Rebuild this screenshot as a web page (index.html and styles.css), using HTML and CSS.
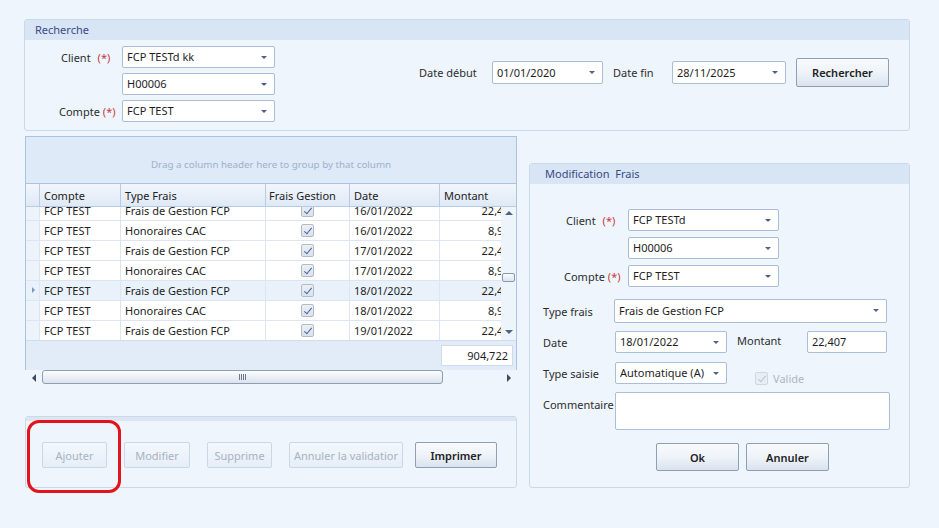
FILE: index.html
```html
<!DOCTYPE html>
<html lang="fr">
<head>
    <meta charset="UTF-8">
    <title>Frais</title>
    <link rel="stylesheet" href="styles.css">
</head>
<body>
<div class="screen">
    <section class="panel search">
        <div class="panel-head">Recherche</div>
        <div class="search-body">
            <div class="party">
                <div class="lbl lbl-client">Client <span class="req">(*)</span></div>
                <div class="combo">FCP TESTd kk</div>
                <div></div>
                <div class="combo">H00006</div>
                <div class="lbl lbl-compte">Compte <span class="req tight">(*)</span></div>
                <div class="combo">FCP TEST</div>
            </div>
            <div class="dates">
                <div class="lbl w-debut">Date début</div>
                <div class="combo date-a">01/01/2020</div>
                <div class="lbl w-fin">Date fin</div>
                <div class="combo date-b">28/11/2025</div>
                <button class="btn strong search-btn">Rechercher</button>
            </div>
        </div>
    </section>

    <div class="lower">
        <div class="left-col">
            <div class="grid">
                <div class="group-area">Drag a column header here to group by that column</div>
                <div class="grid-head">
                    <div class="head-view">
                        <div class="c ind"></div>
                        <div class="c compte">Compte</div>
                        <div class="c type">Type Frais</div>
                        <div class="c gest">Frais Gestion</div>
                        <div class="c date">Date</div>
                        <div class="c mnt">Montant</div>
                    </div>
                    <div class="head-corner"></div>
                </div>
                <div class="grid-body">
                    <div class="rows-view">
                        <div class="rows">
                            <div class="row"><div class="c ind"></div><div class="c compte">FCP TEST</div><div class="c type">Frais de Gestion FCP</div><div class="c gest"><span class="chk"></span></div><div class="c date">16/01/2022</div><div class="c mnt">22,407</div></div>
                            <div class="row"><div class="c ind"></div><div class="c compte">FCP TEST</div><div class="c type">Honoraires CAC</div><div class="c gest"><span class="chk"></span></div><div class="c date">16/01/2022</div><div class="c mnt">8,907</div></div>
                            <div class="row"><div class="c ind"></div><div class="c compte">FCP TEST</div><div class="c type">Frais de Gestion FCP</div><div class="c gest"><span class="chk"></span></div><div class="c date">17/01/2022</div><div class="c mnt">22,407</div></div>
                            <div class="row"><div class="c ind"></div><div class="c compte">FCP TEST</div><div class="c type">Honoraires CAC</div><div class="c gest"><span class="chk"></span></div><div class="c date">17/01/2022</div><div class="c mnt">8,907</div></div>
                            <div class="row current"><div class="c ind"><span class="cur"></span></div><div class="c compte">FCP TEST</div><div class="c type">Frais de Gestion FCP</div><div class="c gest"><span class="chk"></span></div><div class="c date">18/01/2022</div><div class="c mnt">22,407</div></div>
                            <div class="row"><div class="c ind"></div><div class="c compte">FCP TEST</div><div class="c type">Honoraires CAC</div><div class="c gest"><span class="chk"></span></div><div class="c date">18/01/2022</div><div class="c mnt">8,907</div></div>
                            <div class="row"><div class="c ind"></div><div class="c compte">FCP TEST</div><div class="c type">Frais de Gestion FCP</div><div class="c gest"><span class="chk"></span></div><div class="c date">19/01/2022</div><div class="c mnt">22,407</div></div>
                        </div>
                    </div>
                    <div class="vscroll">
                        <span class="arr up"></span>
                        <span class="vthumb"></span>
                        <span class="arr down"></span>
                    </div>
                </div>
                <div class="grid-foot">
                    <div class="total">904,722</div>
                </div>
            </div>
            <div class="hscroll">
                <span class="arr left"></span>
                <span class="hthumb"><span class="grip"></span></span>
                <span class="arr right"></span>
            </div>

            <section class="panel actions">
                <div class="actions-band"></div>
                <div class="actions-row">
                    <button class="btn off b-add">Ajouter</button>
                    <button class="btn off b-mod">Modifier</button>
                    <button class="btn off b-del">Supprime</button>
                    <button class="btn off b-cancel">Annuler la validatior</button>
                    <button class="btn strong b-print">Imprimer</button>
                </div>
                <div class="mark"></div>
            </section>
        </div>

        <section class="panel edit">
            <div class="panel-head">Modification&nbsp; Frais</div>
            <div class="edit-body">
                <div class="who">
                    <div class="f-row">
                        <div class="lbl who-lbl">Client <span class="req">(*)</span></div>
                        <div class="combo who-combo">FCP TESTd</div>
                    </div>
                    <div class="f-row gap6">
                        <div class="lbl who-lbl"></div>
                        <div class="combo who-combo">H00006</div>
                    </div>
                    <div class="f-row gap6">
                        <div class="lbl who-lbl lbl-compte2">Compte <span class="req tight">(*)</span></div>
                        <div class="combo who-combo">FCP TEST</div>
                    </div>
                </div>
                <div class="f-row type-row">
                    <div class="lbl f-lbl type-lbl">Type frais</div>
                    <div class="combo type-combo">Frais de Gestion FCP</div>
                </div>
                <div class="f-row date-row">
                    <div class="lbl f-lbl">Date</div>
                    <div class="combo small-combo">18/01/2022</div>
                    <div class="lbl mnt-lbl">Montant</div>
                    <div class="field mnt-field">22,407</div>
                </div>
                <div class="f-row saisie-row">
                    <div class="lbl f-lbl">Type saisie</div>
                    <div class="combo small-combo">Automatique (A)</div>
                    <div class="valide"><span class="chk dim"></span>Valide</div>
                </div>
                <div class="f-row comment-row">
                    <div class="lbl f-lbl comment-lbl">Commentaire</div>
                    <div class="field comment"></div>
                </div>
                <div class="f-row edit-btns">
                    <button class="btn strong b-ok">Ok</button>
                    <button class="btn strong b-annuler">Annuler</button>
                </div>
            </div>
        </section>
    </div>
</div>
</body>
</html>
```

FILE: styles.css
```css
* { box-sizing: border-box; }
body {
    margin: 0;
    background: #eef5fd;
    font-family: "Noto Sans", "Open Sans", sans-serif;
    font-size: 11px;
    color: #2d2d2d;
}
.screen { width: 939px; height: 528px; padding: 19px 0 0 24px; overflow: hidden; }

/* panels */
.panel { border: 1px solid #cad8e8; border-radius: 3px; background: #eef5fd; }
.panel-head { height: 20px; line-height: 19px; padding-left: 10px; background: #d8e5f4; color: #3a4a86; }
.lbl { color: #2d2d2d; white-space: nowrap; display: flex; align-items: center; }
.req { color: #c8393f; margin-left: 7px; }
.req.tight { margin-left: 3px; }

/* inputs */
.combo, .field {
    position: relative;
    height: 22px;
    background: #fff;
    border: 1px solid #a9bed8;
    border-radius: 2px;
    padding: 0 18px 0 4px;
    line-height: 19px;
    color: #1e1e1e;
    white-space: nowrap;
}
.combo::after {
    content: "";
    position: absolute;
    right: 7px;
    top: 9px;
    border-left: 3px solid transparent;
    border-right: 3px solid transparent;
    border-top: 3px solid #4f6188;
}
.btn {
    font-family: inherit;
    font-size: 11px;
    height: 26px;
    border: 1px solid #c9d7e7;
    border-radius: 2px;
    background: linear-gradient(#f4f8fd, #e6eef8);
    color: #a8b2be;
    padding: 0;
}
.btn.strong {
    border-color: #8e9fb6;
    background: linear-gradient(#f8fafd 0%, #eef3f9 50%, #d9e3ef 100%);
    color: #222;
    font-weight: 600;
}

/* search panel */
.search { width: 886px; height: 112px; }
.search-body { display: flex; padding-top: 6px; }
.party { display: grid; grid-template-columns: 97px 153px; grid-auto-rows: 22px; row-gap: 5px; }
.lbl-client { padding-left: 36px; }
.lbl-compte { padding-left: 34px; }
.dates { display: flex; align-items: center; height: 29px; margin: 12px 0 0 144px; }
.w-debut { width: 73px; }
.w-fin { width: 69px; padding-left: 10px; }
.date-a { width: 111px; height: 23px; line-height: 21px; }
.date-b { width: 114px; height: 23px; line-height: 21px; }
.search-btn { width: 93px; height: 29px; margin-left: 10px; }

/* lower area */
.lower { display: flex; align-items: flex-start; }
.left-col { width: 493px; padding-left: 1px; margin-top: 5px; }

/* data grid */
.grid { border: 1px solid #a9c3e4; border-bottom: none; background: #fff; }
.group-area {
    height: 47px;
    padding-top: 9px;
    display: flex;
    align-items: center;
    justify-content: center;
    background: #dfeaf8;
    color: #9cb0cc;
    font-size: 9.8px;
    border-bottom: 1px solid #a9c3e4;
}
.grid-head { display: flex; height: 23px; background: linear-gradient(#f2f6fc, #dfe9f6); border-bottom: 1px solid #b6cbe6; }
.head-view { width: 475px; overflow: hidden; display: flex; }
.head-view .c { border-right: 1px solid #b6cbe6; padding-left: 4px; display: flex; align-items: center; color: #222; }
.head-view .gest { padding-left: 3px; }
.head-corner { flex: 1; }
.c { flex: none; white-space: nowrap; overflow: hidden; }
.ind { width: 14px; }
.compte { width: 81px; }
.type { width: 145px; }
.gest { width: 84px; }
.date { width: 90px; }
.mnt { width: 81px; }

.grid-body { display: flex; height: 133px; }
.rows-view { width: 475px; overflow: hidden; }
.rows { margin-top: -6px; }
.row { display: flex; height: 20px; border-bottom: 1px solid #dce6f3; background: #fff; }
.row .c { border-right: 1px solid #dce6f3; padding-left: 4px; line-height: 19px; color: #1e1e1e; }
.row .ind { background: #edf3fb; padding: 0; position: relative; }
.row .gest { display: flex; justify-content: center; align-items: center; padding: 0; }
.row .mnt { text-align: right; padding: 0 4px 0 0; }
.row.current { background: #e9f1fb; }
.row.current .c { background: #e9f1fb; }
.cur {
    position: absolute;
    left: 6px;
    top: 6px;
    border-top: 3px solid transparent;
    border-bottom: 3px solid transparent;
    border-left: 3px solid #7d95bb;
}
.chk {
    position: relative;
    display: inline-block;
    width: 13px;
    height: 13px;
    border: 1px solid #b3bbc6;
    border-radius: 2px;
    background: linear-gradient(#eceff3, #dde2e8);
}
.chk::after {
    content: "";
    position: absolute;
    left: 4px;
    top: 1px;
    width: 3px;
    height: 7px;
    border-right: 1.5px solid #3e66ac;
    border-bottom: 1.5px solid #3e66ac;
    transform: rotate(40deg);
}
.chk.dim { border-color: #cfd7e1; background: #e9eef4; }
.chk.dim::after { border-color: #b9c2cd; }

.vscroll { position: relative; flex: 1; background: #eef4fc; }
.arr { position: absolute; width: 0; height: 0; }
.arr.up { left: 4px; top: 4px; border-left: 4px solid transparent; border-right: 4px solid transparent; border-bottom: 4px solid #4f6188; }
.arr.down { left: 4px; bottom: 6px; border-left: 4px solid transparent; border-right: 4px solid transparent; border-top: 4px solid #4f6188; }
.vthumb {
    position: absolute;
    left: 1px;
    top: 66px;
    width: 13px;
    height: 9px;
    border: 1px solid #8797ad;
    border-radius: 2px;
    background: linear-gradient(#fbfcfe, #dce4ee);
}
.grid-foot {
    height: 30px;
    background: #e2ecf9;
    border-top: 1px solid #d0ddee;
    padding: 4px 0 0 415px;
}
.total {
    width: 72px;
    height: 21px;
    background: #fff;
    border: 1px solid #cddbec;
    text-align: right;
    padding-right: 4px;
    line-height: 19px;
    color: #1e1e1e;
}
.hscroll { position: relative; height: 15px; }
.arr.left { left: 7px; top: 4px; border-top: 4px solid transparent; border-bottom: 4px solid transparent; border-right: 4px solid #3d4a60; }
.arr.right { right: 6px; top: 4px; border-top: 4px solid transparent; border-bottom: 4px solid transparent; border-left: 4px solid #3d4a60; }
.hthumb {
    position: absolute;
    left: 17px;
    top: 0;
    width: 401px;
    height: 14px;
    border: 1px solid #8e9db2;
    border-radius: 3px;
    background: linear-gradient(#fbfcfe, #dbe3ed);
}
.grip {
    position: absolute;
    left: 196px;
    top: 3px;
    width: 7px;
    height: 6px;
    background: repeating-linear-gradient(90deg, #6b7a90 0 1px, transparent 1px 2px);
}

/* action buttons */
.actions { position: relative; height: 72px; margin-top: 31px; }
.actions-band { height: 4px; background: #dbe6f2; }
.actions-row { display: flex; gap: 17px; padding: 21px 0 0 16px; }
.b-add { width: 65px; }
.b-mod { width: 66px; }
.b-del { width: 65px; }
.b-cancel { width: 114px; }
.b-print { width: 82px; margin-left: -5px; }
.mark {
    position: absolute;
    left: 1px;
    top: 3px;
    width: 94px;
    height: 73px;
    border: 3px solid #e2131d;
    border-radius: 12px;
}

/* modification panel */
.edit { width: 381px; height: 325px; margin: 32px 0 0 12px; }
.edit .panel-head { padding-left: 15px; }
.edit-body { padding: 25px 0 0 13px; }
.f-row { display: flex; align-items: center; }
.who { padding-left: 23px; }
.gap6 { margin-top: 6px; }
.who-lbl { width: 62px; height: 22px; }
.lbl-compte2 { margin-left: -2px; width: 64px; }
.who-combo { width: 151px; }
.type-row { margin-top: 12px; }
.f-lbl { width: 72px; }
.type-lbl { width: 71px; }
.type-combo { width: 273px; height: 24px; line-height: 21px; }
.date-row { margin-top: 8px; }
.small-combo { width: 112px; }
.mnt-lbl { width: 80px; padding-left: 10px; margin-top: -3px; }
.mnt-field { width: 80px; padding-right: 4px; }
.saisie-row { margin-top: 7px; }
.valide { display: flex; align-items: center; margin: 11px 0 0 28px; color: #aeb6c1; }
.valide .chk { margin-right: 5px; }
.comment-row { margin-top: 6px; align-items: flex-start; }
.comment-lbl { padding-top: 5px; }
.comment { width: 275px; height: 38px; }
.edit-btns { margin: 13px 0 0 113px; gap: 7px; }
.b-ok, .b-annuler { width: 83px; height: 28px; }
```
